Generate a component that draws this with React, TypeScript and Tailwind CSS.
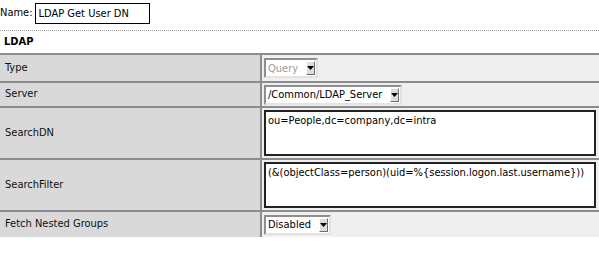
import React from 'react';

const font = { fontFamily: "'DejaVu Sans Condensed', 'Liberation Sans', sans-serif" };

function Arrow() {
  return (
    <span className="ml-auto flex h-[14px] w-[12px] items-center justify-center border border-t-white border-l-white border-b-[#6f6f6f] border-r-[#6f6f6f] bg-[#dcdcdc]">
      <svg width="7" height="4" viewBox="0 0 7 4">
        <path d="M0 0h7L3.5 4z" fill="#000" />
      </svg>
    </span>
  );
}

function FakeSelect({ value, width, muted }: { value: string; width: string; muted?: boolean }) {
  return (
    <div
      className={`flex h-[20px] items-center border-2 border-t-[#8e8e8e] border-l-[#8e8e8e] border-b-[#e2e2e2] border-r-[#e2e2e2] bg-white pl-[2px] pr-[1px] ${width}`}
    >
      <span className={`pr-2 text-[11px] leading-none ${muted ? 'text-[#9a9a9a]' : 'text-black'}`}>{value}</span>
      <Arrow />
    </div>
  );
}

function Row({ label, children, height, last }: { label: string; children: React.ReactNode; height: string; last?: boolean }) {
  return (
    <div className={`flex ${height} ${last ? '' : 'border-b-2 border-[#8c8c8c]'}`}>
      <div className="flex w-[260px] shrink-0 items-center bg-[#d9d9d9] pl-[5px] text-[11px] text-[#111]">{label}</div>
      <div className="w-[2px] shrink-0 bg-[#8c8c8c]" />
      <div className="flex flex-1 items-center bg-[#efefef] pl-[2px]">{children}</div>
    </div>
  );
}

export default function App() {
  return (
    <div className="h-[256px] w-[599px] overflow-hidden bg-white text-black" style={font}>
      <div className="flex h-[26px] items-center">
        <label htmlFor="name" className="text-[11px]">Name:</label>
        <input
          id="name"
          defaultValue="LDAP Get User DN"
          className="ml-[2px] h-[21px] w-[115px] border border-black px-[3px] text-[11px] outline-none"
        />
      </div>
      <div className="mt-[4px] border-t border-dotted border-[#9a9a9a]" />
      <div className="flex h-[22px] items-center pl-[4px] text-[11px] font-bold">LDAP</div>
      <div className="border-t-2 border-[#8c8c8c]">
        <Row label="Type" height="h-[28px]">
          <FakeSelect value="Query" width="w-[54px]" muted />
        </Row>
        <Row label="Server" height="h-[25px]">
          <FakeSelect value="/Common/LDAP_Server" width="w-[138px]" />
        </Row>
        <Row label="SearchDN" height="h-[52px]">
          <textarea
            defaultValue="ou=People,dc=company,dc=intra"
            className="h-[46px] w-[332px] resize-none border-2 border-[#222] bg-white px-[2px] py-[1px] text-[11px] outline-none"
          />
        </Row>
        <Row label="SearchFilter" height="h-[52px]">
          <textarea
            defaultValue="(&(objectClass=person)(uid=%{session.logon.last.username}))"
            className="h-[46px] w-[332px] resize-none border-2 border-[#222] bg-white px-[2px] py-[1px] text-[11px] outline-none"
          />
        </Row>
        <Row label="Fetch Nested Groups" height="h-[25px]" last>
          <FakeSelect value="Disabled" width="w-[67px]" />
        </Row>
      </div>
    </div>
  );
}
